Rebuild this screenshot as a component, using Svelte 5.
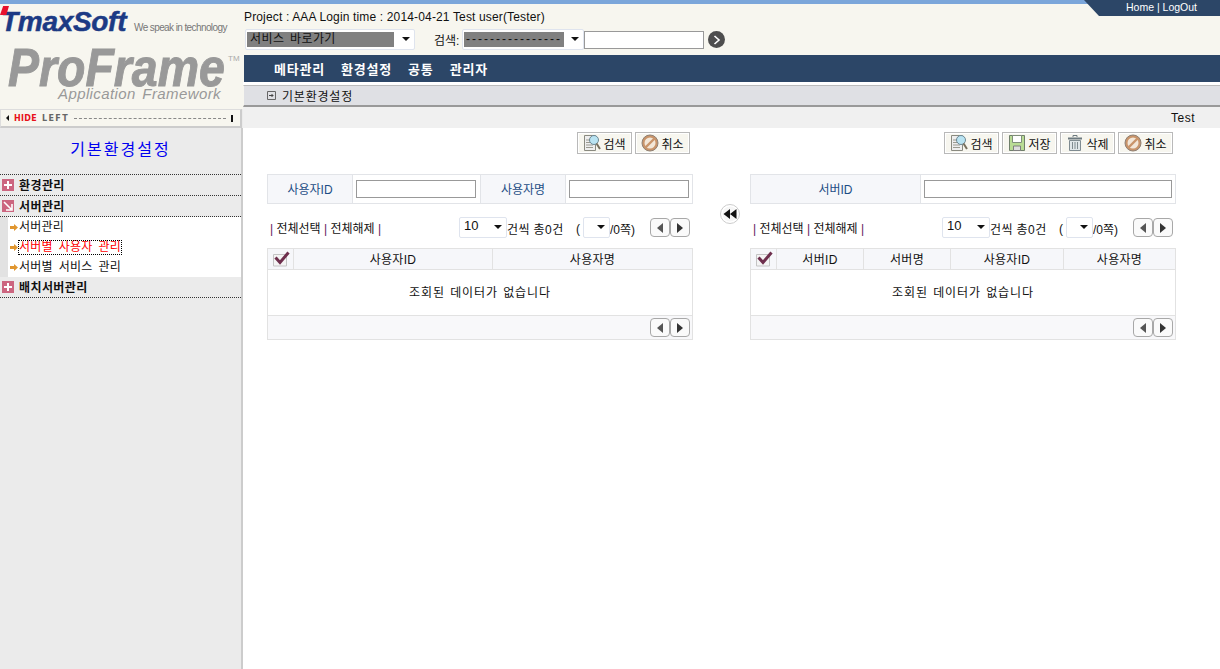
<script>
  const sideMenu = [
    { label: "서버관리", href: "#", current: false },
    { label: "서버별 사용자 관리", href: "#", current: true },
    { label: "서버별 서비스 관리", href: "#", current: false },
  ];
  const leftCols = ["사용자ID", "사용자명"];
  const rightCols = ["서버ID", "서버명", "사용자ID", "사용자명"];
</script>

{#snippet searchIcon()}
  <svg width="18" height="18" viewBox="0 0 18 18">
    <path d="M1.500 1.500h11v15h-11z" fill="#eee" stroke="#8a8a80" />
    <path d="M3 6h5M3 8.500h5M3 11h7M3 13.500h7" stroke="#9a9a90" />
    <circle cx="11" cy="6" r="4.500" fill="#b9e3f2" stroke="#6d8793" />
    <path d="M13.500 9.500l3.500 5.500" stroke="#77705e" stroke-width="2" />
  </svg>
{/snippet}

{#snippet cancelIcon()}
  <svg width="18" height="18" viewBox="0 0 18 18">
    <circle cx="9" cy="9" r="8" fill="#c9946a" stroke="#8f8175" />
    <circle cx="9" cy="9" r="5.500" fill="#f3e7d8" />
    <path d="M4.500 13.500l9-9" stroke="#c9946a" stroke-width="2.400" />
  </svg>
{/snippet}

{#snippet saveIcon()}
  <svg width="18" height="18" viewBox="0 0 18 18">
    <path d="M1.500 1.500h15v15h-15z" fill="#b9dc94" stroke="#6f7f6a" />
    <path d="M4.500 1.500h9v7h-9z" fill="#fff" stroke="#7f8f7a" />
    <path d="M5.500 12h7v4.500h-7z" fill="#ddd" stroke="#7f7f7f" />
  </svg>
{/snippet}

{#snippet trashIcon()}
  <svg width="18" height="18" viewBox="0 0 18 18">
    <path d="M2 4.500h14" stroke="#6d7a80" stroke-width="2" />
    <path d="M7 3V1.500h4V3" fill="none" stroke="#6d7a80" />
    <path d="M3.500 6.500h11v10h-11z" fill="#dfe6ea" stroke="#7f8b91" />
    <path d="M6.500 8v7M9 8v7M11.500 8v7" stroke="#7f8b91" />
  </svg>
{/snippet}

{#snippet plusIcon()}
  <svg width="12" height="12" viewBox="0 0 12 12"><path d="M0 0h12v12H0z" fill="#cc6680" /><path d="M2 6h8M6 2v8" stroke="#fff" stroke-width="2" /></svg>
{/snippet}

{#snippet toolButton(icon, label)}
  <button class="tool" type="button">{@render icon()}<span>{label}</span></button>
{/snippet}

{#snippet pager()}
  <div class="pager">
    <button type="button" aria-label="이전"><i class="tri left"></i></button>
    <button type="button" aria-label="다음"><i class="tri right"></i></button>
  </div>
{/snippet}

{#snippet paging()}
  <div class="paging">
    <div class="picks"><em>|</em> 전체선택 <em>|</em> 전체해제 <em>|</em></div>
    <div class="count">
      <div class="combo size"><span>10</span><i class="caret"></i></div>
      <span class="unit">건씩 총0건</span>
      <span class="paren">(</span>
      <div class="combo page"><i class="caret"></i></div>
      <span class="pages">/0쪽)</span>
      {@render pager()}
    </div>
  </div>
{/snippet}

{#snippet grid(cols, cls)}
  <div class="grid {cls}">
    <div class="grid-head">
      <div class="check-cell">
        <svg width="18" height="16" viewBox="0 0 18 16">
          <path d="M1.500 3.500h13v11.500h-13z" fill="#f4f4f4" stroke="#c4c4c4" />
          <path d="M3.500 6.500l4.500 5 8.500-10" fill="none" stroke="#6e2f4d" stroke-width="3" />
        </svg>
      </div>
      {#each cols as col}
        <div class="grid-col">{col}</div>
      {/each}
    </div>
    <div class="grid-empty">조회된 데이터가 없습니다</div>
    <div class="grid-foot">{@render pager()}</div>
  </div>
{/snippet}

<div class="page-root">
  <div class="strip"></div>
  <div class="corner">Home <em>|</em> LogOut</div>

  <div class="frame">
    <aside class="side">
      <div class="logo">
        <i class="logo-red"></i>
        <div class="brand"><b>TmaxSoft</b><span>We speak in technology</span></div>
        <div class="product">ProFrame</div>
        <span class="tm">TM</span>
        <div class="tagline">Application Framework</div>
      </div>
      <div class="hide-bar">
        <i class="hide-tri"></i>
        <b class="hide-red">HIDE</b>
        <b class="hide-gray">LEFT</b>
        <i class="hide-line"></i>
        <i class="hide-end"></i>
      </div>
      <nav class="tree">
        <h2>기본환경설정</h2>
        <div class="branch">
          {@render plusIcon()}
          <span>환경관리</span>
        </div>
        <div class="branch">
          <svg width="12" height="12" viewBox="0 0 12 12"><path d="M0 0h12v12H0z" fill="#cc6680" /><path d="M2 2l7 7M10 4v6H4" fill="none" stroke="#fff" stroke-width="1.600" /></svg>
          <span>서버관리</span>
        </div>
        <ul class="leaves">
          {#each sideMenu as item}
            <li>
              <svg width="8" height="7" viewBox="0 0 8 7"><path d="M0 2h4V0l4 3.500L4 7V5H0z" fill="#e0962f" /></svg>
              <a href={item.href} class:current={item.current}>{item.label}</a>
            </li>
          {/each}
        </ul>
        <div class="branch">
          {@render plusIcon()}
          <span>배치서버관리</span>
        </div>
      </nav>
    </aside>

    <main class="main">
      <header class="head">
        <div class="info">Project : AAA Login time : 2014-04-21 Test user(Tester)</div>
        <div class="service-row">
          <div class="combo service"><span>서비스 바로가기</span><i class="caret"></i></div>
          <label class="search-label" for="q">검색:</label>
          <div class="combo field"><span>----------------</span><i class="caret"></i></div>
          <input id="q" class="query" type="text" />
          <button class="go" type="button" aria-label="검색">
            <svg width="8" height="10" viewBox="0 0 8 10"><path d="M1.500 1l4.500 4-4.500 4" fill="none" stroke="#fff" stroke-width="1.600" /></svg>
          </button>
        </div>
      </header>
      <div class="menu">
        <span>메타관리</span><span>환경설정</span><span>공통</span><span>관리자</span>
      </div>
      <div class="crumb">
        <svg width="9" height="9" viewBox="0 0 9 9"><path d="M.5.500h8v8h-8z" fill="none" stroke="#666" /><path d="M2 4.500h4M4.500 3l1.500 1.500L4.500 6" fill="none" stroke="#444" /></svg>
        기본환경설정
      </div>
      <div class="title-bar">Test</div>

      <div class="panels">
        <section class="panel">
          <div class="tools">
            {@render toolButton(searchIcon, "검색")}
            {@render toolButton(cancelIcon, "취소")}
          </div>
          <div class="form two">
            <div class="th">사용자ID</div>
            <div class="td"><input type="text" /></div>
            <div class="th">사용자명</div>
            <div class="td"><input type="text" /></div>
          </div>
          {@render paging()}
          {@render grid(leftCols, "cols-left")}
        </section>

        <div class="mover">
          <button type="button" aria-label="왼쪽으로 이동">
            <svg width="20" height="20" viewBox="0 0 20 20">
              <circle cx="10" cy="10" r="9.500" fill="#fff" stroke="#ccc" />
              <circle cx="10" cy="10" r="7.500" fill="#f6f6f6" />
              <path d="M10 5v10L3.500 10zM16.500 5v10L10 10z" fill="#111" />
            </svg>
          </button>
        </div>

        <section class="panel">
          <div class="tools">
            {@render toolButton(searchIcon, "검색")}
            {@render toolButton(saveIcon, "저장")}
            {@render toolButton(trashIcon, "삭제")}
            {@render toolButton(cancelIcon, "취소")}
          </div>
          <div class="form one">
            <div class="th">서버ID</div>
            <div class="td"><input type="text" /></div>
          </div>
          {@render paging()}
          {@render grid(rightCols, "cols-right")}
        </section>
      </div>
    </main>
  </div>
</div>

<style>
  :global(body) {
    margin: 0;
    background: #fff;
  }

  .page-root {
    position: relative;
    width: 1220px;
    height: 669px;
    overflow: hidden;
    font-family: "Liberation Sans", "Noto Sans CJK KR", sans-serif;
    font-size: 12px;
    color: #111;
  }

  .strip {
    height: 4px;
    background: #7ba6da;
  }

  .corner {
    position: absolute;
    top: 0;
    right: 0;
    width: 136px;
    height: 16px;
    box-sizing: border-box;
    padding: 0 0 0 42px;
    background: #2c4667;
    clip-path: polygon(0 0, 100% 0, 100% 100%, 15px 100%);
    color: #fff;
    font-size: 10.500px;
    line-height: 15px;
    white-space: nowrap;
  }

  .corner em {
    font-style: normal;
  }

  .frame {
    display: flex;
    height: 665px;
  }

  /* left column */
  .side {
    width: 243px;
    flex: none;
    display: flex;
    flex-direction: column;
    background: #ebebeb;
  }

  /* the logo is artwork, its parts are placed by hand */
  .logo {
    position: relative;
    height: 105px;
    background: #f7f6ef;
    overflow: hidden;
  }

  .logo-red {
    position: absolute;
    left: 0;
    top: 2px;
    width: 9px;
    height: 9px;
    background: #e8112d;
    clip-path: polygon(35% 0, 100% 0, 70% 100%, 0 100%);
  }

  .brand {
    display: flex;
    align-items: baseline;
    margin: 3px 0 0 1px;
    white-space: nowrap;
  }

  .brand b {
    font-size: 28px;
    font-style: italic;
    letter-spacing: -0.3px;
    color: #1c3a84;
    line-height: 30px;
    width: 133px;
    -webkit-text-stroke: 0.5px #1c3a84;
  }

  .brand span {
    font-size: 10px;
    letter-spacing: -0.6px;
    color: #777;
  }

  .product {
    position: absolute;
    left: 8px;
    top: 36px;
    font-size: 54px;
    font-weight: 700;
    font-style: italic;
    color: #999;
    line-height: 54px;
    white-space: nowrap;
    transform: scaleX(0.86);
    transform-origin: left;
    -webkit-text-stroke: 1px #999;
  }

  .tm {
    position: absolute;
    left: 228px;
    top: 50px;
    font-size: 8px;
    color: #aaa;
  }

  .tagline {
    position: absolute;
    left: 58px;
    top: 82px;
    font-size: 15px;
    font-style: italic;
    letter-spacing: 0.4px;
    word-spacing: 2px;
    color: #999;
    line-height: 16px;
    white-space: nowrap;
  }

  .hide-bar {
    display: flex;
    align-items: center;
    gap: 5px;
    height: 19px;
    width: 242px;
    box-sizing: border-box;
    padding: 0 7px 0 5px;
    background: #f7f6ef;
    border: 1px solid #ddd;
    border-bottom: 2px solid #ccc;
    border-right: 2px solid #ccc;
    font-family: "DejaVu Sans", sans-serif;
    font-size: 8px;
  }

  .hide-tri {
    width: 0;
    height: 0;
    border: 3px solid transparent;
    border-left: 0;
    border-right: 3px solid #111;
  }

  .hide-red {
    color: #e8111a;
    letter-spacing: 0.3px;
  }

  .hide-gray {
    color: #666;
    letter-spacing: 1.400px;
  }

  .hide-line {
    flex: 1;
    border-top: 1px dashed #888;
  }

  .hide-end {
    width: 2px;
    height: 7px;
    background: #111;
  }

  .tree {
    flex: 1;
    width: 241px;
    border-right: 2px solid #ccc;
  }

  .tree h2 {
    margin: 0;
    height: 46px;
    line-height: 44px;
    text-align: center;
    font-size: 16px;
    font-weight: 400;
    color: #0000f0;
    letter-spacing: 2px;
  }

  .branch {
    display: flex;
    align-items: center;
    gap: 5px;
    height: 20px;
    padding-left: 2px;
    border-bottom: 1px dotted #333;
    font-weight: 700;
    letter-spacing: 0.4px;
  }

  .branch span {
    margin-top: -2px;
  }

  .branch:first-of-type {
    border-top: 1px dotted #333;
  }

  .leaves {
    list-style: none;
    margin: 0;
    padding: 0;
    background: #e2e2e2;
  }

  .leaves li {
    display: flex;
    align-items: center;
    gap: 1px;
    height: 20px;
    box-sizing: border-box;
    margin-left: 8px;
    padding: 1px 0 0 2px;
    background: #fff;
  }

  .leaves a {
    color: #111;
    text-decoration: none;
    line-height: 13px;
    letter-spacing: 0.2px;
    word-spacing: 2.500px;
  }

  .leaves a.current {
    color: #f00;
    outline: 1px dotted #000;
  }

  /* right column */
  .main {
    flex: 1;
    min-width: 0;
    display: flex;
    flex-direction: column;
  }

  .head {
    height: 51px;
    box-sizing: border-box;
    padding: 6px 0 0 1px;
    background: #f7f6ef;
  }

  .info {
    font-size: 12px;
    line-height: 15px;
    letter-spacing: 0.15px;
  }

  .service-row {
    display: flex;
    align-items: center;
    margin: 4px 0 0 1px;
  }

  .combo {
    position: relative;
    box-sizing: border-box;
    background: #fff;
    border: 1px solid #dfe4ee;
    border-radius: 2px;
    height: 21px;
  }

  .combo span {
    display: block;
    height: 15px;
    line-height: 14px;
    margin-top: 1px;
  }

  .caret {
    position: absolute;
    right: 4px;
    top: 7px;
    width: 0;
    height: 0;
    border: 4px solid transparent;
    border-top: 4px solid #111;
    border-bottom: 0;
  }

  .service {
    width: 170px;
    padding: 1px;
  }

  .service span {
    width: 147px;
    padding-left: 3px;
    box-sizing: border-box;
    background: #808080;
    letter-spacing: 0.4px;
    word-spacing: 2px;
  }

  .search-label {
    margin: 0 1px 0 19px;
    width: 27px;
    white-space: nowrap;
  }

  .field {
    width: 122px;
    padding: 1px;
  }

  .field span {
    width: 100px;
    box-sizing: border-box;
    padding-left: 2px;
    background: #808080;
    overflow: hidden;
    white-space: nowrap;
    letter-spacing: 2px;
  }

  .query {
    width: 120px;
    height: 18px;
    box-sizing: border-box;
    margin: 0;
    border: 1px solid #999;
    background: #fff;
    padding: 0;
  }

  .go {
    display: flex;
    align-items: center;
    justify-content: center;
    width: 17px;
    height: 17px;
    margin-left: 4px;
    padding: 0;
    border: 0;
    border-radius: 50%;
    background: #4e4e4e;
  }

  .menu {
    display: flex;
    gap: 16px;
    height: 27px;
    padding-left: 30px;
    background: #2c4667;
    border-left: 1px solid #f7f6ef;
    color: #fff;
    font-weight: 700;
    font-size: 13px;
    line-height: 29px;
    letter-spacing: 0.8px;
  }

  .crumb {
    display: flex;
    align-items: center;
    gap: 6px;
    height: 19px;
    padding: 0 0 0 23px;
    margin-top: 3px;
    background: #dfe0e4;
    border-top: 1px solid #bbb;
    border-bottom: 2px solid #999;
    border-left: 1px solid #f7f6ef;
    letter-spacing: 0.8px;
  }

  .title-bar {
    height: 21px;
    padding-right: 25px;
    background: #f0f0f0;
    text-align: right;
    line-height: 23px;
    letter-spacing: 0.5px;
  }

  .panels {
    display: flex;
    padding: 4px 0 0 24px;
  }

  .panel {
    width: 426px;
    flex: none;
  }

  .mover {
    width: 57px;
    flex: none;
    padding: 72px 0 0 27px;
    box-sizing: border-box;
  }

  .mover button {
    display: block;
    width: 20px;
    height: 20px;
    padding: 0;
    border: 0;
    background: none;
  }

  .tools {
    display: flex;
    justify-content: flex-end;
    gap: 3px;
    height: 22px;
    padding-right: 3px;
  }

  .tool {
    display: flex;
    align-items: center;
    justify-content: center;
    gap: 2px;
    width: 55px;
    height: 22px;
    box-sizing: border-box;
    padding: 0;
    border: 1px solid #b9b9b9;
    box-shadow: inset 0 0 0 1px #fff;
    background: #f7f6ef;
    font: inherit;
    color: #111;
  }

  .form {
    display: grid;
    height: 30px;
    margin-top: 20px;
    box-sizing: border-box;
    border: 1px solid #e2e4e8;
  }

  .form.two {
    grid-template-columns: 85px 128px 85px 1fr;
  }

  .form.one {
    grid-template-columns: 170px 1fr;
  }

  .th {
    display: flex;
    align-items: center;
    justify-content: center;
    padding-bottom: 2px;
    background: #f6f7fa;
    color: #1c4d84;
    border-right: 1px solid #e2e4e8;
  }

  .td {
    display: flex;
    align-items: center;
    padding: 0 3px;
    border-right: 1px solid #e2e4e8;
  }

  .two .td:nth-child(2) {
    padding-right: 4px;
  }

  .td:last-child {
    border-right: 0;
  }

  .td input {
    width: 100%;
    height: 18px;
    box-sizing: border-box;
    padding: 0;
    border: 1px solid #999;
    background: #fff;
  }

  .paging {
    display: flex;
    align-items: center;
    justify-content: space-between;
    height: 21px;
    margin-top: 13px;
    padding: 0 3px;
  }

  .picks {
    padding-bottom: 1px;
    white-space: nowrap;
  }

  .picks em {
    font-style: normal;
    color: #602060;
  }

  .count {
    display: flex;
    align-items: center;
  }

  .size {
    width: 48px;
    padding-left: 4px;
    font-size: 13px;
  }

  .page {
    width: 27px;
    margin-left: 3px;
  }

  .unit {
    letter-spacing: 0.4px;
    width: 69px;
    white-space: nowrap;
    padding-top: 2px;
  }

  .paren,
  .pages {
    padding-top: 2px;
  }

  .pages {
    width: 40px;
    white-space: nowrap;
  }

  .pager {
    display: flex;
  }

  .pager button {
    display: flex;
    align-items: center;
    justify-content: center;
    width: 20px;
    height: 19px;
    padding: 0;
    box-sizing: border-box;
    border: 1px solid #a8a8a8;
    border-radius: 4px;
    background: #fafafa;
  }

  .tri {
    width: 0;
    height: 0;
    border: 5px solid transparent;
  }

  .tri.left {
    border-left: 0;
    border-right: 6px solid #555;
  }

  .tri.right {
    border-right: 0;
    border-left: 6px solid #333;
  }

  .grid {
    margin-top: 10px;
    border: 1px solid #e2e2e2;
    height: 92px;
    box-sizing: border-box;
    display: flex;
    flex-direction: column;
  }

  .grid-head {
    display: grid;
    height: 20px;
    flex: none;
    background: #f6f7fa;
    border-bottom: 1px solid #e2e2e2;
  }

  .cols-left .grid-head {
    grid-template-columns: 26px 199px 1fr;
  }

  .cols-right .grid-head {
    grid-template-columns: 26px 87px 87px 113px 1fr;
  }

  .check-cell,
  .grid-col {
    display: flex;
    align-items: center;
    justify-content: center;
    border-right: 1px solid #e2e2e2;
  }

  .grid-col {
    padding-bottom: 2px;
    letter-spacing: 0.3px;
  }

  .grid-col:last-child {
    border-right: 0;
  }

  .grid-empty {
    flex: 1;
    display: flex;
    align-items: center;
    justify-content: center;
    padding-bottom: 3px;
    letter-spacing: 0.9px;
    word-spacing: 1px;
  }

  .grid-foot {
    display: flex;
    align-items: center;
    justify-content: flex-end;
    flex: none;
    height: 23px;
    padding-right: 2px;
    background: #f8f8fa;
    border-top: 1px solid #e2e2e2;
  }
</style>
